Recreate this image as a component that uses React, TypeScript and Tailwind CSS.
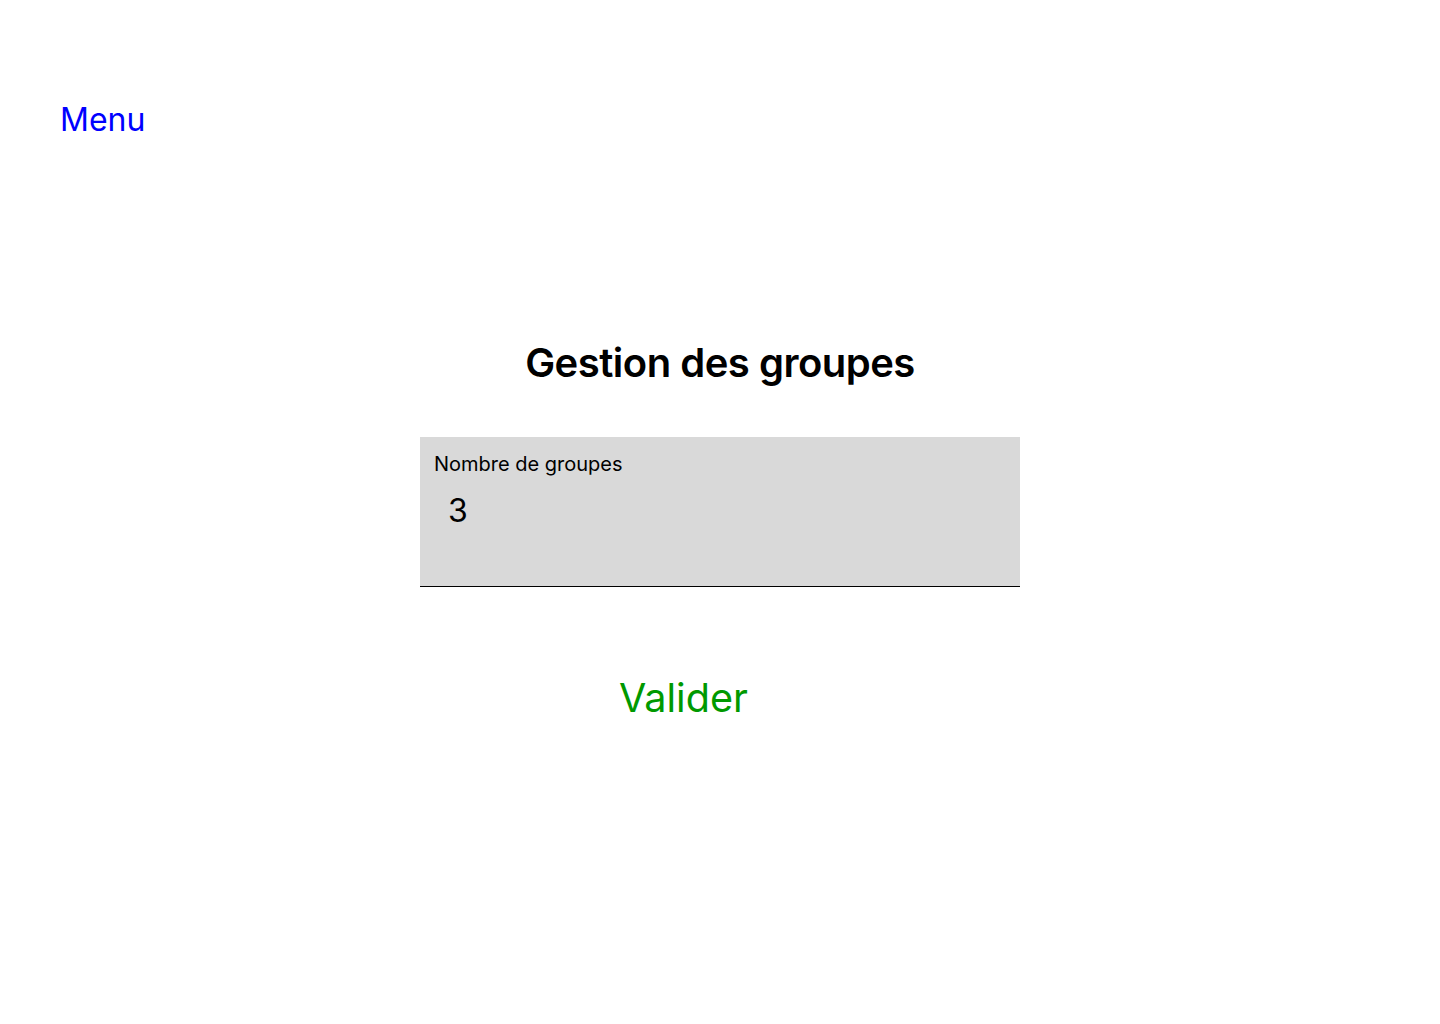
import { useState } from "react";

export default function App() {
  const [count, setCount] = useState("3");

  return (
    <div className="min-h-screen bg-white font-['Inter',sans-serif] text-black">
      <nav className="px-[60px] pt-[98px]">
        <a href="#" className="text-[32px] leading-[44px] text-[#0000ff]">
          Menu
        </a>
      </nav>

      <main className="flex flex-col items-center pt-[197px]">
        <h1 className="text-[40px] font-semibold leading-[48px] tracking-[-0.5px]">
          Gestion des groupes
        </h1>

        <label className="mt-[50px] flex h-[150px] w-[600px] flex-col border-b border-black bg-[#d9d9d9] px-[14px] pt-[14px]">
          <span className="text-[20px] leading-[26px]">Nombre de groupes</span>
          <input
            value={count}
            onChange={(e) => setCount(e.target.value)}
            className="mt-[14px] w-full bg-transparent px-[14px] text-[32px] leading-[40px] outline-none"
          />
        </label>

        <div className="mt-[87px] flex w-[600px] pl-[199px]">
          <button className="text-[39.6px] leading-[48px] text-[#009900]">
            Valider
          </button>
        </div>
      </main>
    </div>
  );
}
